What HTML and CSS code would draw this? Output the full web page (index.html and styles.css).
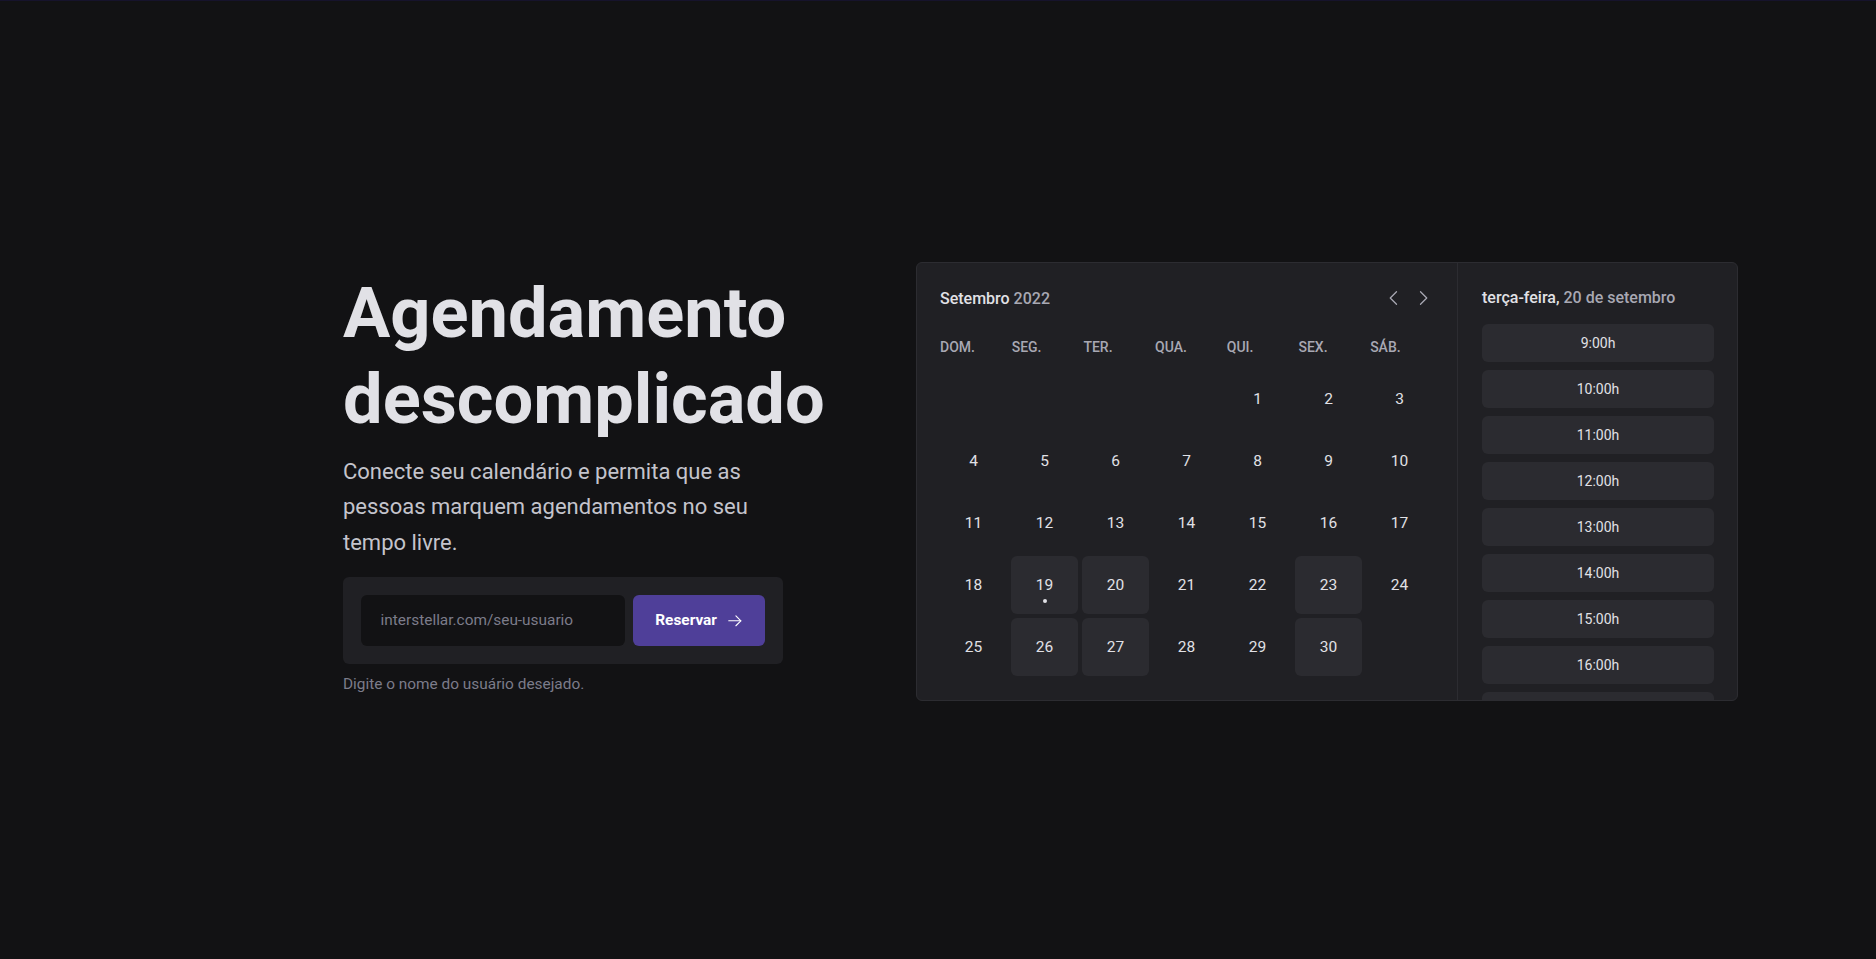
FILE: index.html
```html
<!DOCTYPE html>
<html lang="pt-BR">
<head>
<meta charset="utf-8">
<title>Agendamento descomplicado</title>
<link rel="stylesheet" href="styles.css">
</head>
<body>
<div class="page">
  <main class="home">
    <section class="hero">
      <h1 class="hero-title">Agendamento descomplicado</h1>
      <p class="hero-text">Conecte seu calendário e permita que as pessoas marquem agendamentos no seu tempo livre.</p>
      <form class="claim">
        <input class="claim-input" type="text" placeholder="interstellar.com/seu-usuario">
        <button class="claim-btn" type="button">Reservar
          <svg viewBox="0 0 256 256" fill="none" stroke="currentColor" stroke-width="16" stroke-linecap="round" stroke-linejoin="round"><line x1="40" y1="128" x2="216" y2="128"/><polyline points="144,56 216,128 144,200"/></svg>
        </button>
      </form>
      <p class="claim-hint">Digite o nome do usuário desejado.</p>
    </section>

    <div class="preview">
      <div class="cal">
        <div class="cal-head">
          <div class="cal-title">Setembro <span>2022</span></div>
          <div class="cal-actions">
            <svg viewBox="0 0 256 256" fill="none" stroke="currentColor" stroke-width="16" stroke-linecap="round" stroke-linejoin="round"><polyline points="160,208 80,128 160,48"/></svg>
            <svg viewBox="0 0 256 256" fill="none" stroke="currentColor" stroke-width="16" stroke-linecap="round" stroke-linejoin="round"><polyline points="96,48 176,128 96,208"/></svg>
          </div>
        </div>
        <div class="weekdays">
          <span>DOM.</span><span>SEG.</span><span>TER.</span><span>QUA.</span><span>QUI.</span><span>SEX.</span><span>SÁB.</span>
        </div>
        <div class="days">
          <span class="day"></span><span class="day"></span><span class="day"></span><span class="day"></span>
          <span class="day">1</span><span class="day">2</span><span class="day">3</span>
          <span class="day">4</span><span class="day">5</span><span class="day">6</span><span class="day">7</span><span class="day">8</span><span class="day">9</span><span class="day">10</span>
          <span class="day">11</span><span class="day">12</span><span class="day">13</span><span class="day">14</span><span class="day">15</span><span class="day">16</span><span class="day">17</span>
          <span class="day">18</span><span class="day available today">19</span><span class="day available">20</span><span class="day">21</span><span class="day">22</span><span class="day available">23</span><span class="day">24</span>
          <span class="day">25</span><span class="day available">26</span><span class="day available">27</span><span class="day">28</span><span class="day">29</span><span class="day available">30</span><span class="day"></span>
        </div>
      </div>
      <div class="times">
        <div class="times-title">terça-feira, <span>20 de setembro</span></div>
        <div class="times-list">
          <span class="time">9:00h</span>
          <span class="time">10:00h</span>
          <span class="time">11:00h</span>
          <span class="time">12:00h</span>
          <span class="time">13:00h</span>
          <span class="time">14:00h</span>
          <span class="time">15:00h</span>
          <span class="time">16:00h</span>
          <span class="time">17:00h</span>
        </div>
      </div>
    </div>
  </main>
</div>
</body>
</html>
```

FILE: styles.css
```css
* { box-sizing: border-box; }

html, body {
  margin: 0;
  height: 100%;
}

body {
  background: #121214;
  color: #e1e1e6;
  font-family: Roboto, "Liberation Sans", Arial, sans-serif;
  -webkit-font-smoothing: antialiased;
}

.page {
  height: 100vh;
  border-top: 1px solid #16132c;
  padding-top: 3px;
  padding-left: 343px;
  display: flex;
  align-items: center;
}

.home {
  display: flex;
  align-items: center;
  gap: 133px;
}

/* Hero */
.hero {
  width: 440px;
  padding-top: 4px;
}

.hero-title {
  margin: 0;
  font-size: 70.4px;
  line-height: 86px;
  font-weight: 700;
  color: #e1e1e6;
}

.hero-text {
  margin: 12px 0 0;
  font-size: 22px;
  line-height: 35.2px;
  color: #c4c4cc;
}

.claim {
  margin-top: 17.6px;
  padding: 17.6px;
  background: #202024;
  border-radius: 6px;
  display: grid;
  grid-template-columns: 1fr auto;
  gap: 8.8px;
}

.claim-input {
  height: 51px;
  border: 0;
  border-radius: 6px;
  background: #121214;
  padding: 0 20px;
  font-family: inherit;
  font-size: 15.4px;
  color: #e1e1e6;
  outline: none;
  min-width: 0;
}

.claim-input::placeholder {
  color: #7c7c8a;
}

.claim-btn {
  width: 132px;
  height: 51px;
  border: 0;
  border-radius: 6px;
  background: #4f3f99;
  color: #ffffff;
  font-family: inherit;
  font-size: 15.4px;
  font-weight: 700;
  display: flex;
  align-items: center;
  justify-content: center;
  gap: 9px;
  padding: 0;
}

.claim-btn svg {
  width: 17.6px;
  height: 17.6px;
  display: block;
}

.claim-hint {
  margin: 8.8px 0 0;
  font-size: 15.4px;
  line-height: 24.6px;
  color: #7c7c8a;
}

/* Preview card */
.preview {
  width: 822px;
  height: 439px;
  flex: none;
  display: grid;
  grid-template-columns: 540px 280px;
  background: #202024;
  border: 1px solid #2c2c31;
  border-radius: 6px;
  overflow: hidden;
}

.cal {
  padding: 24px 24px 24px 23px;
  display: flex;
  flex-direction: column;
}

.cal-head {
  height: 22px;
  display: flex;
  align-items: center;
  justify-content: space-between;
}

.cal-title {
  font-size: 16px;
  font-weight: 500;
  color: #e1e1e6;
}

.cal-title span {
  color: #a8a8b3;
}

.cal-actions {
  display: flex;
  gap: 9px;
  color: #a8a8b3;
}

.cal-actions svg {
  width: 20px;
  height: 20px;
  display: block;
}

.weekdays {
  margin-top: 28px;
  display: grid;
  grid-template-columns: repeat(7, 67px);
  column-gap: 4.7px;
  font-size: 14px;
  line-height: 20px;
  font-weight: 500;
  color: #a8a8b3;
}

.days {
  margin-top: 12.5px;
  display: grid;
  grid-template-columns: repeat(7, 1fr);
  grid-auto-rows: 58px;
  gap: 4px;
}

.day {
  position: relative;
  display: flex;
  align-items: center;
  justify-content: center;
  border-radius: 6px;
  font-size: 15.5px;
  color: #e1e1e6;
}

.day.available {
  background: #2b2b30;
}

.day.today::after {
  content: "";
  position: absolute;
  left: 50%;
  bottom: 11px;
  width: 4px;
  height: 4px;
  margin-left: -2px;
  border-radius: 50%;
  background: #e1e1e6;
}

/* Time picker */
.times {
  border-left: 1px solid #2c2c31;
  padding: 24px 23px 0 24px;
  overflow: hidden;
}

.times-title {
  font-size: 16px;
  line-height: 22px;
  font-weight: 500;
  color: #e1e1e6;
}

.times-title span {
  color: #a8a8b3;
}

.times-list {
  margin-top: 15px;
  display: flex;
  flex-direction: column;
  gap: 8px;
}

.time {
  height: 38px;
  flex: none;
  display: flex;
  align-items: center;
  justify-content: center;
  border-radius: 6px;
  background: #2b2b30;
  font-size: 14px;
  color: #e1e1e6;
}
```
